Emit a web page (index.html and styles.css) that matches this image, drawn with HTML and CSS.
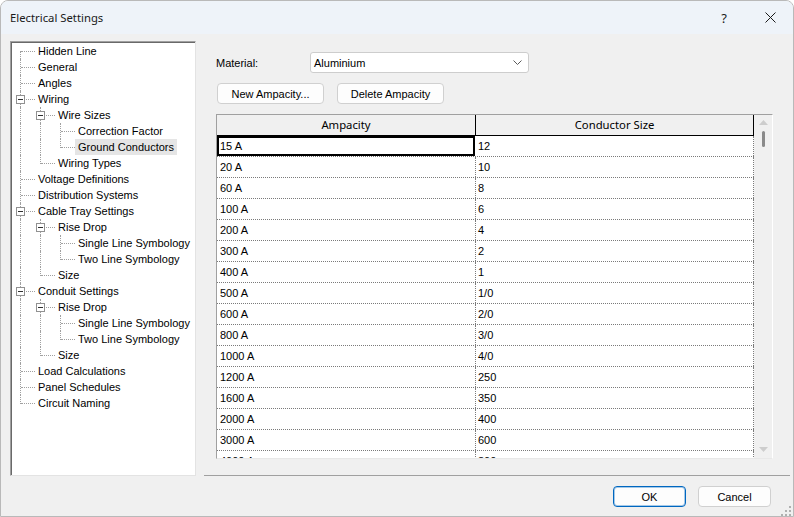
FILE: index.html
```html
<!DOCTYPE html>
<html lang="en">
<head>
  <meta charset="UTF-8">
  <title>Electrical Settings</title>
  <link rel="stylesheet" href="styles.css">
</head>
<body>
  <div class="window">
    <div class="titlebar">
      <span class="title">Electrical Settings</span>
      <span class="help">?</span>
      <span class="close">
        <svg width="11" height="11" viewBox="0 0 11 11"><path d="M0.5 0.5 L10.5 10.5 M10.5 0.5 L0.5 10.5" stroke="#1a1a1a" stroke-width="1" fill="none"/></svg>
      </span>
    </div>

    <div class="body">
      <div class="main">
        <div class="tree">
          <div class="node"><i class="g first"></i><span class="label">Hidden Line</span></div>
          <div class="node"><i class="g tee"></i><span class="label">General</span></div>
          <div class="node"><i class="g tee"></i><span class="label">Angles</span></div>
          <div class="node"><i class="g tee"><b class="box"></b></i><span class="label">Wiring</span></div>
          <div class="node"><i class="g pipe"></i><i class="g tee"><b class="box"></b></i><span class="label">Wire Sizes</span></div>
          <div class="node"><i class="g pipe"></i><i class="g pipe"></i><i class="g tee"></i><span class="label">Correction Factor</span></div>
          <div class="node"><i class="g pipe"></i><i class="g pipe"></i><i class="g corner"></i><span class="label selected">Ground Conductors</span></div>
          <div class="node"><i class="g pipe"></i><i class="g corner"></i><span class="label">Wiring Types</span></div>
          <div class="node"><i class="g tee"></i><span class="label">Voltage Definitions</span></div>
          <div class="node"><i class="g tee"></i><span class="label">Distribution Systems</span></div>
          <div class="node"><i class="g tee"><b class="box"></b></i><span class="label">Cable Tray Settings</span></div>
          <div class="node"><i class="g pipe"></i><i class="g tee"><b class="box"></b></i><span class="label">Rise Drop</span></div>
          <div class="node"><i class="g pipe"></i><i class="g pipe"></i><i class="g tee"></i><span class="label">Single Line Symbology</span></div>
          <div class="node"><i class="g pipe"></i><i class="g pipe"></i><i class="g corner"></i><span class="label">Two Line Symbology</span></div>
          <div class="node"><i class="g pipe"></i><i class="g corner"></i><span class="label">Size</span></div>
          <div class="node"><i class="g tee"><b class="box"></b></i><span class="label">Conduit Settings</span></div>
          <div class="node"><i class="g pipe"></i><i class="g tee"><b class="box"></b></i><span class="label">Rise Drop</span></div>
          <div class="node"><i class="g pipe"></i><i class="g pipe"></i><i class="g tee"></i><span class="label">Single Line Symbology</span></div>
          <div class="node"><i class="g pipe"></i><i class="g pipe"></i><i class="g corner"></i><span class="label">Two Line Symbology</span></div>
          <div class="node"><i class="g pipe"></i><i class="g corner"></i><span class="label">Size</span></div>
          <div class="node"><i class="g tee"></i><span class="label">Load Calculations</span></div>
          <div class="node"><i class="g tee"></i><span class="label">Panel Schedules</span></div>
          <div class="node"><i class="g corner"></i><span class="label">Circuit Naming</span></div>
        </div>

        <div class="pane">
          <div class="pane-content">
            <div class="field">
              <label class="field-label">Material:</label>
              <div class="select">
                <span>Aluminium</span>
                <svg width="9" height="5" viewBox="0 0 9 5"><path d="M0.5 0.5 L4.5 4.5 L8.5 0.5" stroke="#5a5a5a" fill="none"/></svg>
              </div>
            </div>

            <div class="actions">
              <button class="btn">New Ampacity...</button>
              <button class="btn">Delete Ampacity</button>
            </div>

            <div class="grid">
              <div class="cols">
                <div class="head">
                  <div class="hcell">Ampacity</div>
                  <div class="hcell">Conductor Size</div>
                </div>
                <div class="rows">
                  <div class="row"><div class="cell focus">15 A</div><div class="cell">12</div></div>
                  <div class="row"><div class="cell">20 A</div><div class="cell">10</div></div>
                  <div class="row"><div class="cell">60 A</div><div class="cell">8</div></div>
                  <div class="row"><div class="cell">100 A</div><div class="cell">6</div></div>
                  <div class="row"><div class="cell">200 A</div><div class="cell">4</div></div>
                  <div class="row"><div class="cell">300 A</div><div class="cell">2</div></div>
                  <div class="row"><div class="cell">400 A</div><div class="cell">1</div></div>
                  <div class="row"><div class="cell">500 A</div><div class="cell">1/0</div></div>
                  <div class="row"><div class="cell">600 A</div><div class="cell">2/0</div></div>
                  <div class="row"><div class="cell">800 A</div><div class="cell">3/0</div></div>
                  <div class="row"><div class="cell">1000 A</div><div class="cell">4/0</div></div>
                  <div class="row"><div class="cell">1200 A</div><div class="cell">250</div></div>
                  <div class="row"><div class="cell">1600 A</div><div class="cell">350</div></div>
                  <div class="row"><div class="cell">2000 A</div><div class="cell">400</div></div>
                  <div class="row"><div class="cell">3000 A</div><div class="cell">600</div></div>
                  <div class="row"><div class="cell">4000 A</div><div class="cell">800</div></div>
                </div>
              </div>
              <div class="vscroll">
                <svg class="arrow" width="9" height="5" viewBox="0 0 9 5"><path d="M4.5 0 L9 5 L0 5 Z" fill="#cdcdcd"/></svg>
                <div class="thumb"></div>
                <div class="track"></div>
                <svg class="arrow" width="9" height="5" viewBox="0 0 9 5"><path d="M0 0 L9 0 L4.5 5 Z" fill="#cdcdcd"/></svg>
              </div>
            </div>
          </div>
          <div class="rule"></div>
        </div>
      </div>

      <div class="footer">
        <button class="btn btn-default">OK</button>
        <button class="btn">Cancel</button>
      </div>
    </div>

    <svg class="grip" width="10" height="10" viewBox="0 0 10 10">
      <rect x="8" y="0" width="2" height="2" fill="#b0b0b0"/>
      <rect x="4" y="4" width="2" height="2" fill="#b0b0b0"/>
      <rect x="8" y="4" width="2" height="2" fill="#b0b0b0"/>
      <rect x="0" y="8" width="2" height="2" fill="#b0b0b0"/>
      <rect x="4" y="8" width="2" height="2" fill="#b0b0b0"/>
      <rect x="8" y="8" width="2" height="2" fill="#b0b0b0"/>
    </svg>
  </div>
</body>
</html>
```

FILE: styles.css
```css
* {
  box-sizing: border-box;
}
body {
  margin: 0;
  font-family: "Liberation Sans", Arial, sans-serif;
  font-size: 11px;
  color: #000;
  background: #ffffff;
}
.window {
  position: relative;
  width: 794px;
  height: 517px;
  border: 1px solid #b9b9b9;
  border-radius: 8px 8px 0 0;
  background: #f0f0f0;
  overflow: hidden;
  display: flex;
  flex-direction: column;
}
.titlebar {
  height: 33px;
  flex: none;
  display: flex;
  align-items: center;
  background: #eef3f9;
  font-family: "Noto Sans", "Open Sans", sans-serif;
  font-size: 11.3px;
  color: #1a1a1a;
}
.title {
  margin-left: 9px;
  flex: 1;
}
.help {
  width: 46px;
  text-align: center;
  font-size: 13px;
}
.close {
  width: 46px;
  display: flex;
  justify-content: center;
  margin-right: 0;
}
.body {
  flex: 1;
  display: flex;
  flex-direction: column;
}
.main {
  display: flex;
  padding: 7px 0 0 9px;
}

/* tree */
.tree {
  width: 186px;
  height: 435px;
  background: #fff;
  border: 1px solid;
  border-color: #a0a0a0 #e3e3e3 #e3e3e3 #a0a0a0;
  box-shadow: inset 1px 1px 0 #696969;
  padding: 1px 0 0 1px;
}
.node {
  display: flex;
  height: 16px;
  line-height: 16px;
  white-space: nowrap;
}
.g {
  position: relative;
  flex: none;
  width: 20px;
  height: 16px;
}
.g::before,
.g::after {
  content: "";
  position: absolute;
}
.pipe::before,
.tee::before {
  left: 8px;
  top: 0;
  height: 16px;
  border-left: 1px dotted #a0a0a0;
}
.first::before {
  left: 8px;
  top: 8px;
  height: 8px;
  border-left: 1px dotted #a0a0a0;
}
.corner::before {
  left: 8px;
  top: 0;
  height: 9px;
  border-left: 1px dotted #a0a0a0;
}
.tee::after,
.corner::after,
.first::after {
  left: 9px;
  top: 8px;
  width: 14px;
  border-top: 1px dotted #a0a0a0;
}
.box {
  position: absolute;
  left: 4px;
  top: 4px;
  width: 9px;
  height: 9px;
  background: #fff;
  border: 1px solid #919191;
  z-index: 1;
}
.box::after {
  content: "";
  position: absolute;
  left: 1px;
  top: 3px;
  width: 5px;
  height: 1px;
  background: #303030;
}
.label {
  margin-left: 3px;
  padding: 0 3px;
}
.label.selected {
  background: #e5e5e5;
}

/* right pane */
.pane {
  flex: 1;
  height: 435px;
  display: flex;
  flex-direction: column;
}
.pane-content {
  padding: 11px 0 0 20px;
}
.field {
  display: flex;
  align-items: center;
  height: 21px;
}
.field-label {
  width: 94px;
}
.select {
  width: 219px;
  height: 21px;
  display: flex;
  align-items: center;
  justify-content: space-between;
  padding: 0 6px 0 3px;
  background: #fff;
  border: 1px solid #cdcdcd;
  border-radius: 3px;
}
.actions {
  display: flex;
  gap: 13px;
  margin: 10px 0 0 1px;
}
.btn {
  height: 21px;
  width: 107px;
  padding: 0;
  font-family: "Liberation Sans", Arial, sans-serif;
  font-size: 11px;
  color: #000;
  background: #fdfdfd;
  border: 1px solid #d0d0d0;
  border-radius: 4px;
}
.btn-default {
  border-color: #0067c0;
  box-shadow: inset 0 0 0 1px rgba(0, 103, 192, 0.35);
}

/* ampacity grid */
.grid {
  display: flex;
  width: 557px;
  height: 345px;
  margin-top: 10px;
  border: 1px solid;
  border-color: #a0a0a0 #fff #e8e8e8 #a0a0a0;
  background: #fff;
}
.cols {
  width: 537px;
  overflow: hidden;
}
.head {
  display: grid;
  grid-template-columns: 259px 278px;
  height: 21px;
  background: #f0f0f0;
  border-bottom: 1px solid #000;
  font-family: "Noto Sans", "Open Sans", sans-serif;
  font-size: 11.3px;
}
.hcell {
  text-align: center;
  line-height: 20px;
  border-right: 1px solid #000;
}
.rows {
  height: 322px;
  overflow: hidden;
}
.row {
  display: grid;
  grid-template-columns: 259px 278px;
  height: 21px;
  border-bottom: 1px dotted #7a7a7a;
}
.cell {
  line-height: 20px;
  padding-left: 3px;
  border-right: 1px dotted #7a7a7a;
}
.cell + .cell {
  padding-left: 2px;
}
.cell.focus {
  border-right: none;
  margin-right: 1px;
  outline: 2px solid #000;
  outline-offset: -2px;
  padding-left: 3px;
}
.vscroll {
  width: 18px;
  background: #f0f0f0;
  display: flex;
  flex-direction: column;
  align-items: center;
  padding: 5px 0 6px;
}
.arrow {
  flex: none;
}
.thumb {
  width: 3px;
  height: 16px;
  margin-top: 6px;
  background: #8a8a8a;
  border-radius: 2px;
}
.track {
  flex: 1;
}
.rule {
  margin: auto 3px 0 8px;
  height: 1px;
  background: #a0a0a0;
}

/* footer */
.footer {
  display: flex;
  justify-content: flex-end;
  gap: 12px;
  padding: 10px 22px 0 0;
}
.footer .btn {
  width: 73px;
}
.grip {
  position: absolute;
  right: 2px;
  bottom: 0;
}
```
